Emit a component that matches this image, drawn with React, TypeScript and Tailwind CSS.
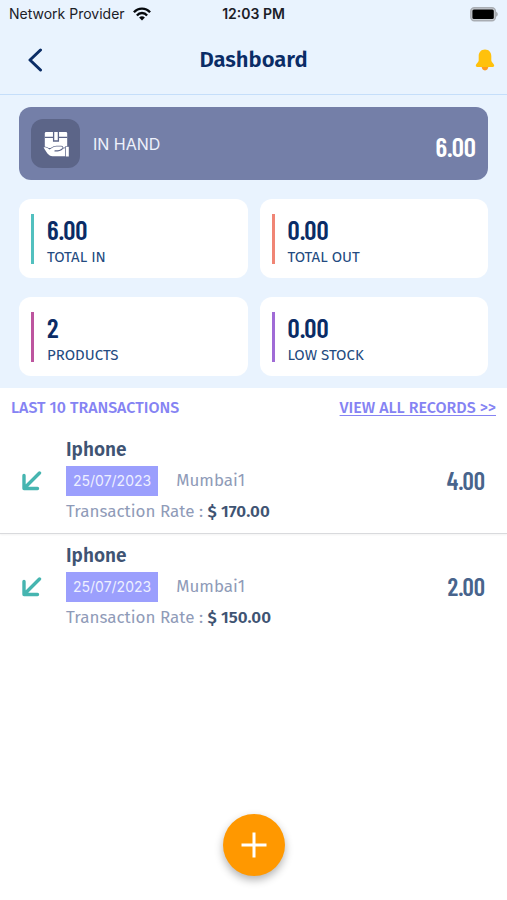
const sans = "font-['Fira_Sans','Noto_Sans',sans-serif]";
const inter = "font-['Inter',sans-serif]";
const narrow = "font-['Barlow_Condensed','Roboto',sans-serif]";

const stats = [
  { value: "6.00", label: "TOTAL IN", bar: "bg-[#52c0bf]" },
  { value: "0.00", label: "TOTAL OUT", bar: "bg-[#f08575]" },
  { value: "2", label: "PRODUCTS", bar: "bg-[#bd559f]" },
  { value: "0.00", label: "LOW STOCK", bar: "bg-[#a06bd6]" },
];

const transactions = [
  { id: 1, name: "Iphone", date: "25/07/2023", place: "Mumbai1", rate: "$ 170.00", qty: "4.00" },
  { id: 2, name: "Iphone", date: "25/07/2023", place: "Mumbai1", rate: "$ 150.00", qty: "2.00" },
];

function StatusBar() {
  return (
    <div className={`grid h-7 grid-cols-[1fr_auto_1fr] items-center px-[9px] text-sm text-[#1b2027] ${inter}`}>
      <div className="flex items-center gap-2 whitespace-nowrap">
        Network Provider
        <svg width="18" height="14" viewBox="0 0 18 14" fill="none" stroke="#05080c" strokeWidth="2.3" aria-hidden="true">
          <path d="M0.9 5.3C5.3 0.3 12.7 0.3 17.1 5.3" />
          <path d="M3.9 8.4C6.6 5.2 11.4 5.2 14.1 8.4" />
          <path d="M9 13.4L6.1 10.4C7.8 8.8 10.2 8.8 11.9 10.4Z" fill="#05080c" stroke="none" />
        </svg>
      </div>
      <div className="text-center font-semibold">12:03 PM</div>
      <svg className="justify-self-end" width="28" height="15" viewBox="0 0 28 15" aria-hidden="true">
        <rect x="0.8" y="0.8" width="24.6" height="13" rx="3.5" fill="#c9cdd2" stroke="#a9adb3" strokeWidth="1.4" />
        <rect x="2.4" y="2.6" width="21.4" height="9.400" rx="1.5" fill="#000" />
        <path d="M26 4.8c2.400 1 2.400 4 0 5z" fill="#a9adb3" />
      </svg>
    </div>
  );
}

function BoxInHand() {
  return (
    <svg width="26" height="26" viewBox="0 0 26 26" aria-hidden="true">
      <path d="M3.200 1h19.600q1.400 0 1.400 1.400V17H1.800V2.400Q1.800 1 3.200 1z" fill="#fff" />
      <path d="M1.800 6.300H10.600M15.400 6.300H24.200M10.600 1V10H15.400V1" fill="none" stroke="#5c6588" strokeWidth="1.300" />
      <path
        d="M.6 16.500C3.200 15.800 5 17.600 6.600 18.600 8.800 17.300 10.500 15.600 13.500 15.600H18C19.500 15.600 20 17 19 17.900L22.400 17V25.300H9.500C5.500 25.300 3 20.500.6 16.500z"
        fill="#fff"
        stroke="#5c6588"
        strokeWidth="1.600"
        paintOrder="stroke"
      />
      <path d="M12 19.900C15 19.900 17.500 19.800 19.300 17.800" fill="none" stroke="#5c6588" strokeWidth="1.200" strokeLinecap="round" />
      <path d="M22.800 15.800h3v9.700h-3z" fill="#fff" stroke="#5c6588" strokeWidth="1.200" paintOrder="stroke" />
    </svg>
  );
}

function Bell() {
  return (
    <svg width="20" height="22" viewBox="0 0 20 22" aria-hidden="true">
      <path d="M6.600 17h6.800c0 2.600-1.300 4.400-3.400 4.400S6.600 19.600 6.600 17z" fill="#ff9a1f" />
      <path d="M10 .6c-4 0-6.300 2.900-6.300 6.600v4.300c0 2-2.900 3.200-2.900 5.100 0 1 .6 1.400 1.400 1.400h15.600c.8 0 1.400-.4 1.400-1.400 0-1.900-2.900-3.100-2.900-5.100V7.200C16.300 3.500 14 .6 10 .6z" fill="#ffc10c" />
    </svg>
  );
}

export default function App() {
  return (
    <div className={`flex min-h-screen flex-col bg-white text-[#0a2c66] ${sans}`}>
      <header className="border-b border-[#c5defa] bg-[#e9f3fe]">
        <StatusBar />
        <div className="grid h-[66px] grid-cols-[1fr_auto_1fr] items-center px-3 pb-0.5">
          <button type="button" aria-label="Back" className="justify-self-start pl-4">
            <svg width="15" height="24" viewBox="0 0 15 24" fill="none" stroke="#0b2d66" strokeWidth="3" strokeLinecap="round" strokeLinejoin="round" aria-hidden="true">
              <path d="M12.500 2L2 12L12.500 22" />
            </svg>
          </button>
          <h1 className="text-[22px] leading-6 font-semibold">Dashboard</h1>
          <button type="button" aria-label="Notifications" className="justify-self-end">
            <Bell />
          </button>
        </div>
      </header>

      <section className="bg-[#e9f3fe] px-[19px] py-3">
        <div className="flex h-[73px] items-center rounded-xl bg-[#747fa8] px-3 text-white">
          <div className="flex size-[49px] items-center justify-center rounded-xl bg-[#5c6588]">
            <BoxInHand />
          </div>
          <span className={`ml-[13px] text-base text-[#eef1fb] ${inter}`}>IN HAND</span>
          <span className={`ml-auto pt-1 text-[27px] leading-8 font-semibold ${narrow}`}>6.00</span>
        </div>
        <div className="mt-[19px] grid grid-cols-2 gap-x-3 gap-y-[19px]">
          {stats.map((s) => (
            <div key={s.label} className="flex h-[79px] items-center gap-[13px] rounded-xl bg-white px-3">
              <div className={`h-[50px] w-[3px] ${s.bar}`} />
              <div className="pt-1">
                <div className={`text-[27px] leading-8 font-semibold ${narrow}`}>{s.value}</div>
                <div className="text-[15px] leading-6 text-[#234a80]">{s.label}</div>
              </div>
            </div>
          ))}
        </div>
      </section>

      <main className="flex-1">
        <div className="flex h-10 items-center justify-between px-[11px] text-base font-medium text-[#8583f3]">
          <h2>LAST 10 TRANSACTIONS</h2>
          <a href="#records" className="underline decoration-1 underline-offset-2">VIEW ALL RECORDS &gt;&gt;</a>
        </div>
        <ul>
          {transactions.map((t, i) => (
            <li
              key={t.id}
              className={`flex h-[106px] items-center px-[22px] ${i === 0 ? "border-b border-[#d9dadd] shadow-xs" : ""}`}
            >
              <svg width="20" height="20" viewBox="0 0 20 20" fill="none" stroke="#46b5b0" strokeWidth="3.400" strokeLinecap="round" strokeLinejoin="round" aria-hidden="true">
                <path d="M17.500 2L2.500 17M2 4.500V17.500H15.500" />
              </svg>
              <div className="ml-6 text-[#8f9bb8]">
                <div className="text-[19px] leading-6 font-semibold text-[#3f5473]">Iphone</div>
                <div className="mt-1 flex items-center gap-[18px]">
                  <span className={`bg-[#9b9ffd] px-[7px] text-sm leading-[30px] text-[#eef0ff] ${inter}`}>{t.date}</span>
                  <span className="text-[17px]">{t.place}</span>
                </div>
                <div className="mt-1 text-[17px] leading-6">
                  Transaction Rate : <strong className="font-semibold text-[#3f5473]">{t.rate}</strong>
                </div>
              </div>
              <span className={`ml-auto text-[25px] font-semibold text-[#48648c] ${narrow}`}>{t.qty}</span>
            </li>
          ))}
        </ul>
      </main>

      <button
        type="button"
        aria-label="Add transaction"
        className="mb-6 flex size-[62px] items-center justify-center self-center rounded-full bg-[#ff9800] shadow-[0_4px_8px_rgba(0,0,0,0.3)]"
      >
        <svg width="26" height="26" viewBox="0 0 26 26" stroke="#fff" strokeWidth="3" aria-hidden="true">
          <path d="M13 0.500V25.500M0.500 13H25.500" />
        </svg>
      </button>
    </div>
  );
}
